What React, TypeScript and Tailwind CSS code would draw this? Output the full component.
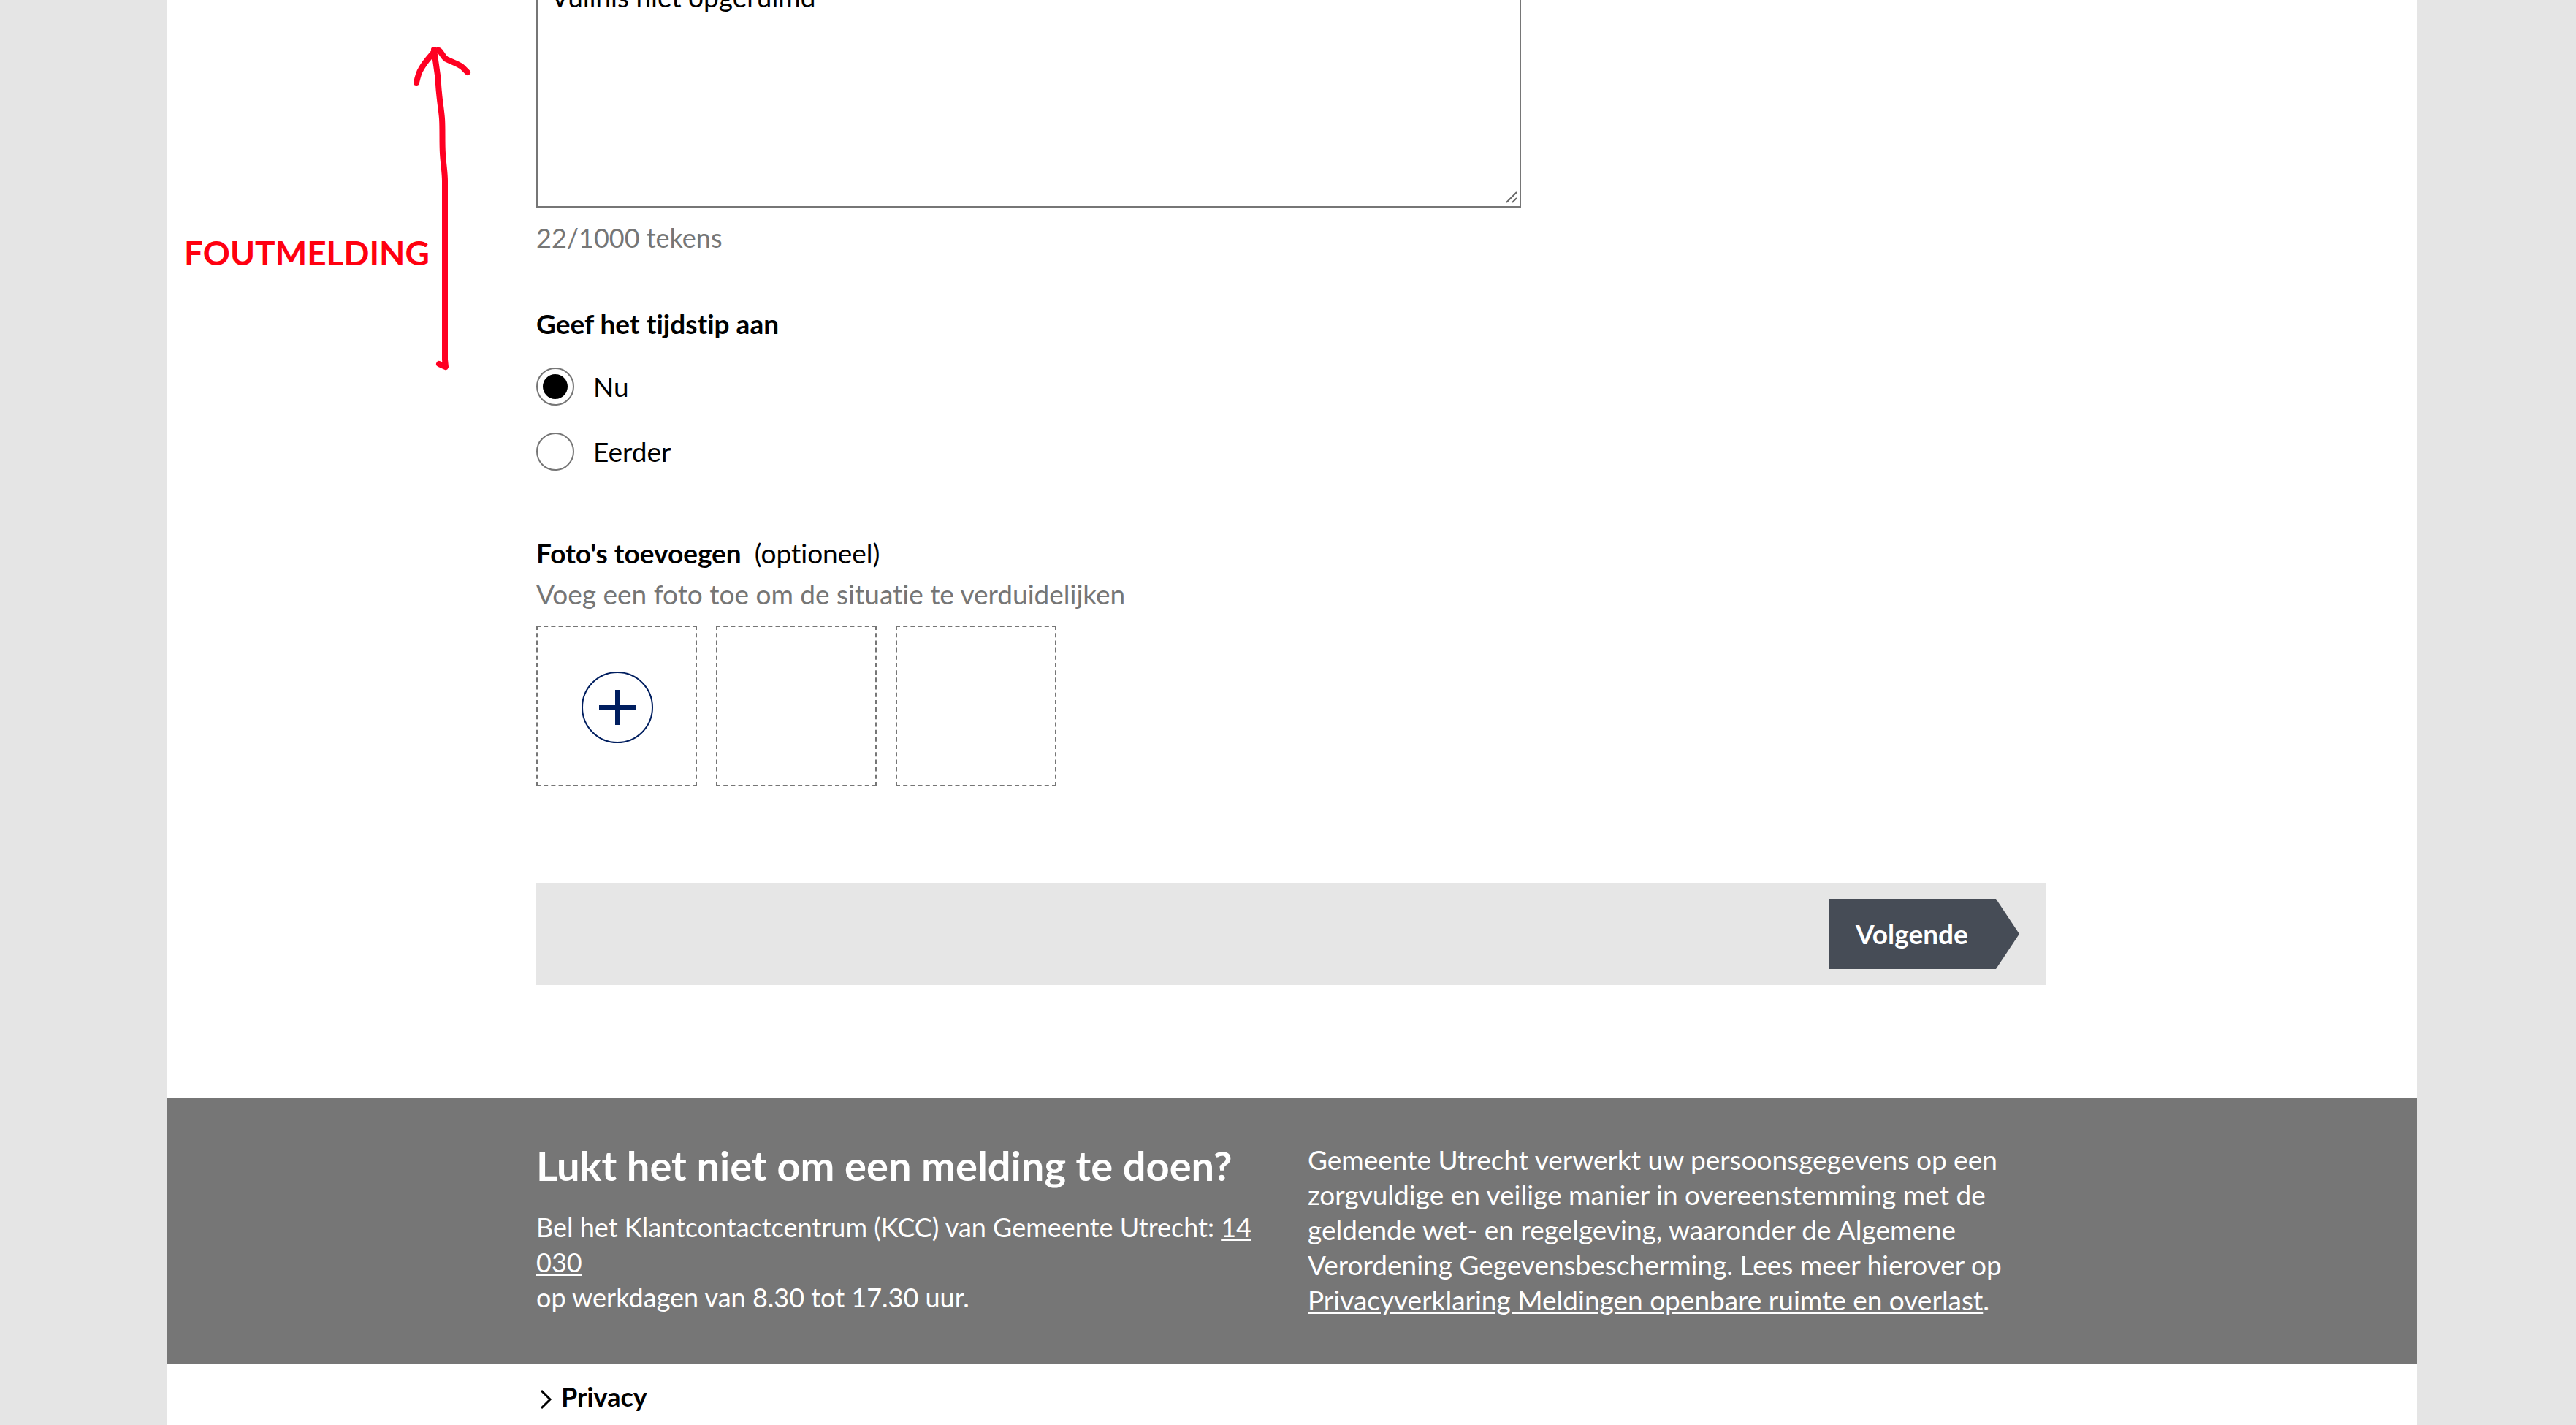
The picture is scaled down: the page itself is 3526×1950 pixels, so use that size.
import { useState } from "react";

function Annotation() {
  return (
    <div className="pointer-events-none absolute left-[24px] top-0 h-[520px] w-[400px]">
      <p className="absolute left-0 top-[316px] text-[46px] leading-[60px] font-bold text-[#ff0010]">
        FOUTMELDING
      </p>
      <svg
        className="absolute left-[308px] top-[50px]"
        width="100"
        height="470"
        viewBox="560 50 100 470"
        fill="none"
        stroke="#ff0022"
        strokeWidth="8"
        strokeLinecap="round"
        strokeLinejoin="round"
        aria-hidden="true"
      >
        <path d="M601 498L610 502L609 492V248C609 236 607 226 606 210C605 194 606 178 605 162C604 150 602 139 601 127C600 119 600 111 599 103L594 68" />
        <path d="M570 113C572 104 574 98 576 95C582 84 586 81 594 71C597 69 599 68 601 69C605 72 606 78 611 81C619 85 629 88 633 92L640 99" />
      </svg>
    </div>
  );
}

function RadioOption(props: {
  id: string;
  label: string;
  checked: boolean;
  onSelect: () => void;
}) {
  return (
    <div className="flex items-center gap-[26px]">
      <span className="grid size-[52px] place-items-center">
        <input
          type="radio"
          name="tijdstip"
          id={props.id}
          checked={props.checked}
          onChange={props.onSelect}
          className="peer col-start-1 row-start-1 size-[52px] appearance-none rounded-full border-2 border-[#767676] bg-white"
        />
        <span className="pointer-events-none col-start-1 row-start-1 hidden size-[34px] rounded-full bg-black peer-checked:block" />
      </span>
      <label htmlFor={props.id}>{props.label}</label>
    </div>
  );
}

function PhotoUpload() {
  return (
    <div className="mt-[19px] flex gap-[26px]">
      <label className="grid size-[220px] cursor-pointer place-items-center border-2 border-dashed border-[#767676] pl-0.5 pt-1">
        <input type="file" accept="image/*" aria-label="Foto toevoegen" className="sr-only" />
        <svg width="98" height="98" viewBox="0 0 98 98" fill="none" stroke="#001e5f" aria-hidden="true">
          <circle cx="49" cy="49" r="48" strokeWidth="2" />
          <path d="M49 25V73M24 49H74" strokeWidth="6" />
        </svg>
      </label>
      <div className="size-[220px] border-2 border-dashed border-[#767676]" />
      <div className="size-[220px] border-2 border-dashed border-[#767676]" />
    </div>
  );
}

export default function App() {
  const [text, setText] = useState("Vuilnis niet opgeruimd");
  const [moment, setMoment] = useState("nu");

  return (
    <div className="min-h-screen overflow-hidden bg-[#e5e5e5] pl-[228px] pr-[218px] font-['Lato',sans-serif] text-[37px] leading-[48px] text-black [font-variant-ligatures:none]">
      <div className="relative flow-root min-h-screen bg-white">
        <Annotation />

        <form className="mx-auto max-w-[2068px] pr-0.5" onSubmit={(e) => e.preventDefault()}>
          <div className="relative -mt-[48px] max-w-[1348px]">
            <textarea
              aria-label="Omschrijving"
              value={text}
              maxLength={1000}
              onChange={(e) => setText(e.target.value)}
              className="block h-[332px] w-full resize-none border-2 border-[#767676] bg-white px-[18px] py-[18px]"
            />
            <svg
              className="absolute bottom-[6px] right-[5px]"
              width="16"
              height="16"
              viewBox="0 0 16 16"
              stroke="#666666"
              strokeWidth="2"
              aria-hidden="true"
            >
              <path d="M1 15L15 1M9 15L15 9" />
            </svg>
          </div>
          <p className="mt-[17px] text-[36px] text-[#767676]">{text.length}/1000 tekens</p>

          <fieldset className="mt-[70px]">
            <legend className="font-bold">Geef het tijdstip aan</legend>
            <div className="mt-9 flex flex-col gap-[37px]">
              <RadioOption id="nu" label="Nu" checked={moment === "nu"} onSelect={() => setMoment("nu")} />
              <RadioOption
                id="eerder"
                label="Eerder"
                checked={moment === "eerder"}
                onSelect={() => setMoment("eerder")}
              />
            </div>
          </fieldset>

          <section className="mt-[89px]">
            <h2 className="flex gap-[18px] font-bold">
              Foto's toevoegen <span className="font-normal">(optioneel)</span>
            </h2>
            <p className="mt-2 text-[#767676]">Voeg een foto toe om de situatie te verduidelijken</p>
            <PhotoUpload />
          </section>

          <div className="mt-[132px] flex h-[140px] items-center justify-end bg-[#e6e6e6] pr-9">
            <button
              type="submit"
              className="h-24 w-[260px] bg-[#464c56] pl-9 text-left font-bold text-white [clip-path:polygon(0_0,228px_0,100%_50%,228px_100%,0_100%)]"
            >
              Volgende
            </button>
          </div>
        </form>

        <footer className="mt-[154px]">
          <div className="bg-[#767676] text-white">
            <div className="mx-auto grid max-w-[2068px] grid-cols-2 gap-11 pb-[63px] pt-[61px]">
              <div>
                <h2 className="text-[56px] leading-[64px] font-bold">Lukt het niet om een melding te doen?</h2>
                <p className="mt-7 text-[36px]">
                  Bel het Klantcontactcentrum (KCC) van Gemeente Utrecht:{" "}
                  <a href="tel:14030" className="underline">
                    14
                    <br />
                    030
                  </a>
                  <br />
                  op werkdagen van 8.30 tot 17.30 uur.
                </p>
              </div>
              <p>
                Gemeente Utrecht verwerkt uw persoonsgegevens op een zorgvuldige en veilige manier in
                overeenstemming met de geldende wet- en regelgeving, waaronder de Algemene Verordening
                Gegevensbescherming. Lees meer hierover op{" "}
                <a href="#privacyverklaring" className="underline">
                  Privacyverklaring Meldingen openbare ruimte en overlast
                </a>
                .
              </p>
            </div>
          </div>
          <div className="mx-auto max-w-[2068px] py-[21px]">
            <a href="#privacy" className="flex items-center gap-3 pl-1 text-[36px] font-bold">
              <svg width="18" height="38" viewBox="0 0 18 38" fill="none" stroke="#000" strokeWidth="3" aria-hidden="true">
                <path d="M3 11L15 23L3 35" />
              </svg>
              Privacy
            </a>
          </div>
        </footer>
      </div>
    </div>
  );
}
